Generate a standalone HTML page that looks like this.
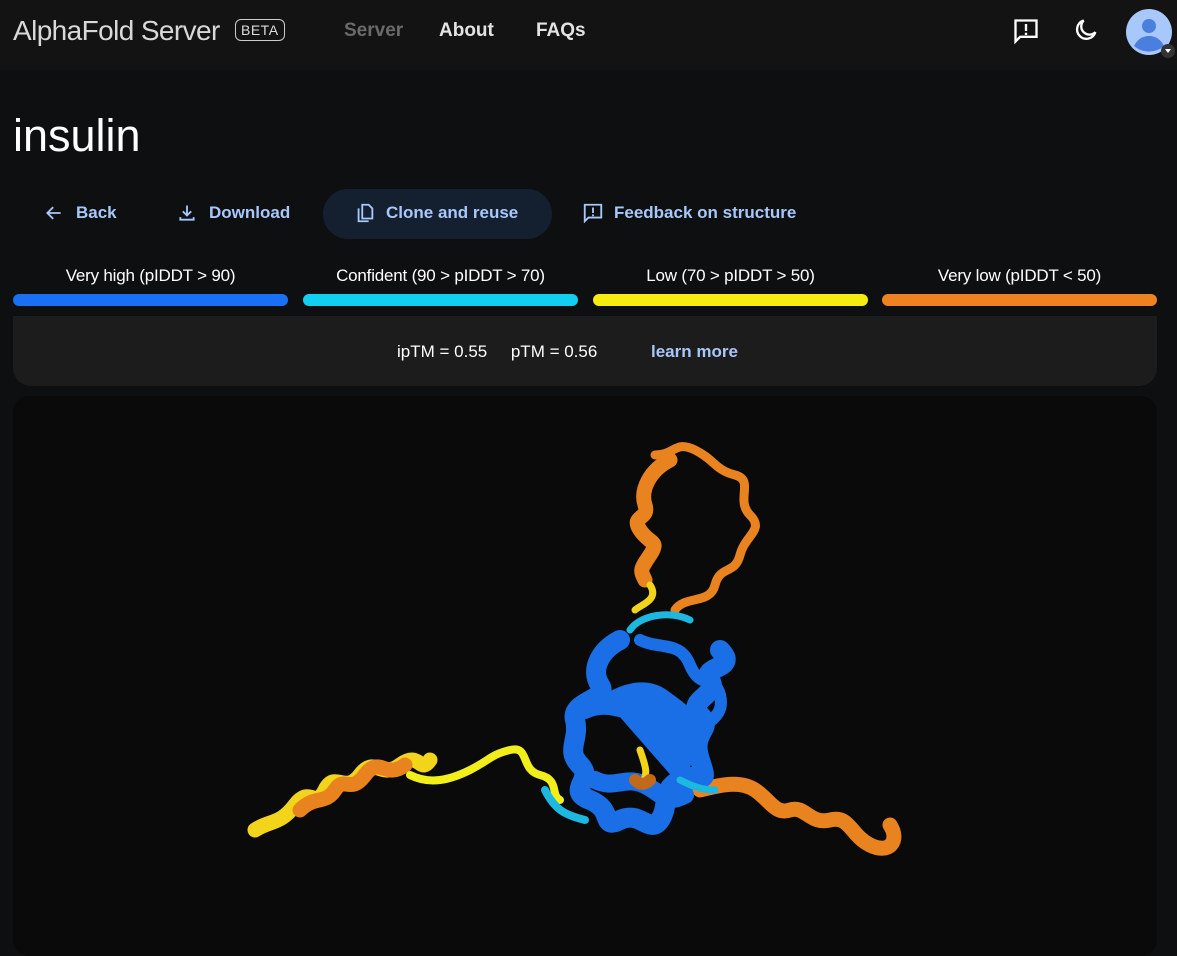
<!DOCTYPE html>
<html><head><meta charset="utf-8"><style>
*{margin:0;padding:0;box-sizing:border-box}
body{width:1177px;height:943px;overflow:hidden;background:#0e0f11;font-family:"Liberation Sans",sans-serif;color:#e3e3e3;position:relative}
.nav{position:absolute;left:0;top:0;width:1177px;height:70px;background:#131314}
.abs{position:absolute;white-space:nowrap}
.logo{left:13px;top:15px;font-size:28px;color:#d8d8d8;letter-spacing:-0.6px}
.beta{left:235px;top:19px;border:1.5px solid #ccc;border-radius:6px;font-size:14px;padding:2px 5px;color:#ddd;letter-spacing:0.5px}
.nl{top:20px;font-size:19px;font-weight:bold}
h1{position:absolute;left:13px;top:110px;font-size:45px;font-weight:normal;color:#fff}
.btn{top:203px;font-size:17px;color:#a8c7fa;font-weight:bold}
.clone{position:absolute;left:323px;top:189px;width:229px;height:50px;border-radius:25px;background:#14202f}
.lab{top:266px;font-size:17px;color:#fff;text-align:center;width:275px;letter-spacing:-0.2px}
.bar{position:absolute;top:294px;height:12px;width:275px;border-radius:6px}
.info{position:absolute;left:13px;top:316px;width:1144px;height:70px;background:#1c1c1c;border-radius:0 0 18px 18px}
.view{position:absolute;left:13px;top:396px;width:1144px;height:560px;background:#0a0a0a;border-radius:16px}
</style></head><body>
<div class="nav"></div>
<div class="abs logo">AlphaFold Server</div>
<div class="abs beta">BETA</div>
<div class="abs nl" style="left:344px;color:#6a6a6a">Server</div>
<div class="abs nl" style="left:439px;color:#e3e3e3">About</div>
<div class="abs nl" style="left:536px;color:#e3e3e3">FAQs</div>
<svg class="abs" style="left:1012px;top:17px" width="28" height="28" viewBox="0 0 24 24"><path d="M3 3h18v14H7l-4 4z" fill="none" stroke="#fff" stroke-width="2"/><rect x="11" y="6" width="2" height="6" fill="#fff"/><rect x="11" y="13.5" width="2" height="2" fill="#fff"/></svg>
<svg class="abs" style="left:1072px;top:17px" width="28" height="28" viewBox="0 0 24 24"><path d="M10 3a8 8 0 1 0 10 10A7 7 0 0 1 10 3z" fill="none" stroke="#fff" stroke-width="2"/></svg>
<svg class="abs" style="left:1126px;top:9px" width="50" height="50" viewBox="0 0 50 50"><circle cx="23" cy="23" r="23" fill="#a8c7fa"/><circle cx="23" cy="17" r="7" fill="#4a7fe0"/><path d="M8 37c4-8 10-10 15-10s11 2 15 10a23 23 0 0 1-30 0z" fill="#4a7fe0"/><circle cx="42" cy="42" r="7" fill="#333"/><path d="M39 40h6l-3 4z" fill="#fff"/></svg>
<h1>insulin</h1>
<div class="clone"></div>
<svg class="abs" style="left:44px;top:203px" width="20" height="20" viewBox="0 0 24 24"><path d="M20 12H5M11 5l-7 7 7 7" fill="none" stroke="#a8c7fa" stroke-width="2.2"/></svg>
<div class="abs btn" style="left:76px">Back</div>
<svg class="abs" style="left:177px;top:203px" width="20" height="20" viewBox="0 0 24 24"><path d="M12 3v12M7 10l5 5 5-5M4 17v3h16v-3" fill="none" stroke="#a8c7fa" stroke-width="2.2"/></svg>
<div class="abs btn" style="left:209px">Download</div>
<svg class="abs" style="left:354px;top:202px" width="22" height="22" viewBox="0 0 24 24"><path d="M5 7v14h11M9 3h7l4 4v11H9z" fill="none" stroke="#a8c7fa" stroke-width="2"/></svg>
<div class="abs btn" style="left:386px">Clone and reuse</div>
<svg class="abs" style="left:582px;top:202px" width="22" height="22" viewBox="0 0 24 24"><path d="M3 3h18v14H7l-4 4z" fill="none" stroke="#a8c7fa" stroke-width="2"/><rect x="11" y="6" width="2" height="6" fill="#a8c7fa"/><rect x="11" y="13.5" width="2" height="2" fill="#a8c7fa"/></svg>
<div class="abs btn" style="left:614px">Feedback on structure</div>
<div class="abs lab" style="left:13px">Very high (pIDDT &gt; 90)</div>
<div class="abs lab" style="left:303px">Confident (90 &gt; pIDDT &gt; 70)</div>
<div class="abs lab" style="left:593px">Low (70 &gt; pIDDT &gt; 50)</div>
<div class="abs lab" style="left:882px">Very low (pIDDT &lt; 50)</div>
<div class="bar" style="left:13px;background:#1a70f5"></div>
<div class="bar" style="left:303px;background:#12cff2"></div>
<div class="bar" style="left:593px;background:#f5ed12"></div>
<div class="bar" style="left:882px;background:#ef8220"></div>
<div class="info"></div>
<div class="abs" style="left:397px;top:342px;font-size:17px;color:#fff">ipTM = 0.55&nbsp;&nbsp;&nbsp;&nbsp;&nbsp;pTM = 0.56</div>
<div class="abs" style="left:651px;top:342px;font-size:17px;color:#a8c7fa;font-weight:bold">learn more</div>
<div class="view"></div>
<svg class="abs" style="left:0;top:0" width="1177" height="943" fill="none" stroke-linecap="round" stroke-linejoin="round">
<path d="M255 830c15-10 25-5 40-25s20 5 30-15 20 5 35-15 20 5 40-10 20 10 30-5" stroke="#f2d41a" stroke-width="15"/>
<path d="M300 810c15-15 25-5 35-20s15 5 30-15 20 5 40-10" stroke="#e9831f" stroke-width="15"/>
<path d="M410 775c20 10 40 5 60-5s20-15 40-20 10 20 30 25 10 20 20 25" stroke="#f2ee1a" stroke-width="8"/>
<path d="M545 790c10 20 20 25 40 30" stroke="#1cb8e0" stroke-width="8"/>
<path d="M700 790c20-5 40-10 55 0s20 25 35 20 20 15 40 10 20 15 40 25 30-5 20-20" stroke="#e9831f" stroke-width="15"/>
<path d="M655 455c20 0 20-15 40-5s20 20 40 25 0 25 15 40-5 20-10 40-20 10-25 30-30 10-40 25" stroke="#e9831f" stroke-width="9"/>
<path d="M670 460c-20 10-30 30-25 45s-15 10-5 25 20 10 10 25-10 15-5 25" stroke="#e9831f" stroke-width="15"/>
<path d="M650 585c10 15-10 20-15 25" stroke="#f2d41a" stroke-width="7"/>
<path d="M630 630c10-15 40-20 60-10" stroke="#1cb8e0" stroke-width="7"/>
<path d="M605 700c15-10 40-20 60-5s30 20 30 40 -10 30-20 45" fill="#1a6fe6" stroke="#1a6fe6" stroke-width="10"/>
<path d="M620 640c-20 10-30 30-20 45s-30 15-25 35 -10 30 5 45 -15 25 10 35 10 30 30 20 30 15 40 0 0-30 20-40 30 10 20-20 15-30 0-45 20-20 10-35 30-10 10-30" stroke="#1a6fe6" stroke-width="20"/>
<path d="M640 640c20 10 40 0 50 25s25 10 30 30-10 25-20 35 10 25 0 40" stroke="#1a6fe6" stroke-width="12"/>
<path d="M585 710c20-10 40 0 60 5s30-10 50 5" stroke="#1a6fe6" stroke-width="18"/>
<path d="M595 780c20 10 30-5 50 5s20 20 40 10" stroke="#1a6fe6" stroke-width="18"/>
<path d="M640 750c5 15 10 25 0 35" stroke="#f2d41a" stroke-width="7"/>
<path d="M635 780c5 5 10 5 15 0" stroke="#c26a1a" stroke-width="12"/>
<path d="M680 780c10 5 20 10 35 10" stroke="#1cb8e0" stroke-width="7"/>
</svg>
</body></html>
